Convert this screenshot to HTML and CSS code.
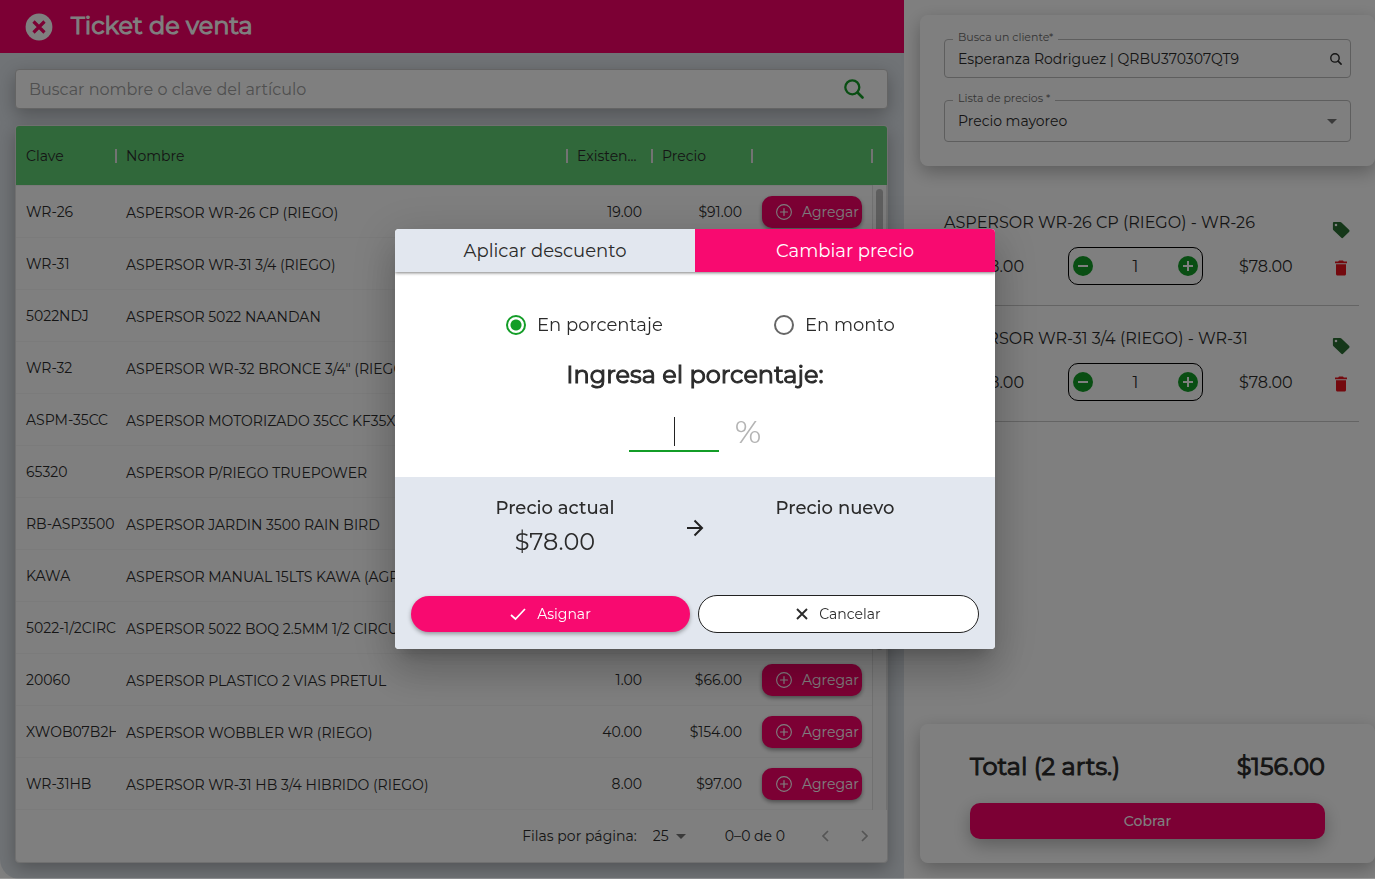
FILE: index.html
```html
<!DOCTYPE html>
<html lang="es">
<head>
<meta charset="utf-8">
<title>Ticket de venta</title>
<link rel="stylesheet" href="styles.css">
</head>
<body>
<svg class="sprite" aria-hidden="true">
  <symbol id="i-plus" viewBox="0 0 16 16"><circle cx="8" cy="8" r="7.4" fill="none" stroke="currentColor" stroke-width="1.1"/><path d="M8 4.500v7M4.500 8h7" fill="none" stroke="currentColor" stroke-width="1.2" stroke-linecap="round"/></symbol>
  <symbol id="i-tag" viewBox="0 0 18 18"><path fill="currentColor" fill-rule="evenodd" d="M2.200.9h6c.5 0 .9.200 1.200.5l7.600 7.300c.7.700.7 1.500 0 2.200l-5.700 5.700c-.7.700-1.500.7-2.200 0L1.500 9.300C1.100 9 .9 8.600.9 8.100v-6C.9 1.400 1.400.9 2.200.9zM4 2.700a1.300 1.300 0 1 0 0 2.600 1.300 1.300 0 0 0 0-2.600z"/></symbol>
  <symbol id="i-trash" viewBox="0 0 14 16"><path fill="currentColor" d="M1 1.500h3.200L5 .6h4l.8.9H13v1.700H1zM2 4.200h10v9.900c0 .9-.6 1.500-1.500 1.500h-7c-.9 0-1.500-.6-1.500-1.500z"/></symbol>
  <symbol id="i-search" viewBox="0 0 20 20"><circle cx="8.300" cy="8.300" r="7" fill="none" stroke="currentColor" stroke-width="2.300"/><path d="M13.500 13.500L18.500 18.500" stroke="currentColor" stroke-width="2.600" stroke-linecap="round"/></symbol>
  <symbol id="i-minus-solid" viewBox="0 0 20 20"><circle cx="10" cy="10" r="10" fill="currentColor"/><path d="M5 10h10" stroke="#fff" stroke-width="2"/></symbol>
  <symbol id="i-plus-solid" viewBox="0 0 20 20"><circle cx="10" cy="10" r="10" fill="currentColor"/><path d="M5 10h10M10 5v10" stroke="#fff" stroke-width="2"/></symbol>
</svg>

<div class="app">
  <main class="catalog">
    <header class="topbar">
      <button class="icon-btn close" aria-label="Cerrar">
        <svg width="28" height="28" viewBox="0 0 28 28"><circle cx="14" cy="14" r="13.400" fill="#fff"/><path d="M8.500 8.500l11 11M19.500 8.500l-11 11" stroke="#f80068" stroke-width="3.200"/></svg>
      </button>
      <h1 class="strong">Ticket de venta</h1>
    </header>
    <div class="catalog-body">
      <div class="search">
        <input type="text" aria-label="Buscar artículo" placeholder="Buscar nombre o clave del artículo">
        <button class="icon-btn green" aria-label="Buscar"><svg width="20" height="20"><use href="#i-search"/></svg></button>
      </div>
      <section class="grid-card">
        <div class="grid-scroll">
          <table>
            <colgroup><col class="c-key"><col><col class="c-stock"><col class="c-price"><col class="c-action"><col class="c-bar"></colgroup>
            <thead><tr><th>Clave</th><th>Nombre</th><th>Existen...</th><th>Precio</th><th></th><th></th></tr></thead>
            <tbody>
              <tr><td>WR-26</td><td>ASPERSOR WR-26 CP (RIEGO)</td><td class="num">19.00</td><td class="num">$91.00</td><td><button class="add"><svg width="16" height="16"><use href="#i-plus"/></svg>Agregar</button></td><td></td></tr>
              <tr><td>WR-31</td><td>ASPERSOR WR-31 3/4 (RIEGO)</td><td></td><td></td><td></td><td></td></tr>
              <tr><td>5022NDJ</td><td>ASPERSOR 5022 NAANDAN</td><td></td><td></td><td></td><td></td></tr>
              <tr><td>WR-32</td><td>ASPERSOR WR-32 BRONCE 3/4" (RIEGO)</td><td></td><td></td><td></td><td></td></tr>
              <tr><td>ASPM-35CC</td><td>ASPERSOR MOTORIZADO 35CC KF35X</td><td></td><td></td><td></td><td></td></tr>
              <tr><td>65320</td><td>ASPERSOR P/RIEGO TRUEPOWER</td><td></td><td></td><td></td><td></td></tr>
              <tr><td>RB-ASP3500</td><td>ASPERSOR JARDIN 3500 RAIN BIRD</td><td></td><td></td><td></td><td></td></tr>
              <tr><td>KAWA</td><td>ASPERSOR MANUAL 15LTS KAWA (AGRICOLA)</td><td></td><td></td><td></td><td></td></tr>
              <tr><td>5022-1/2CIRC</td><td>ASPERSOR 5022 BOQ 2.5MM 1/2 CIRCULO</td><td></td><td></td><td></td><td></td></tr>
              <tr><td>20060</td><td>ASPERSOR PLASTICO 2 VIAS PRETUL</td><td class="num">1.00</td><td class="num">$66.00</td><td><button class="add"><svg width="16" height="16"><use href="#i-plus"/></svg>Agregar</button></td><td></td></tr>
              <tr><td>XWOB07B2H</td><td>ASPERSOR WOBBLER WR (RIEGO)</td><td class="num">40.00</td><td class="num">$154.00</td><td><button class="add"><svg width="16" height="16"><use href="#i-plus"/></svg>Agregar</button></td><td></td></tr>
              <tr><td>WR-31HB</td><td>ASPERSOR WR-31 HB 3/4 HIBRIDO (RIEGO)</td><td class="num">8.00</td><td class="num">$97.00</td><td><button class="add"><svg width="16" height="16"><use href="#i-plus"/></svg>Agregar</button></td><td></td></tr>
            </tbody>
          </table>
          <div class="track"><div class="thumb"></div></div>
        </div>
        <footer class="pager">
          <label for="rows">Filas por página:</label>
          <div class="select-wrap rows-wrap"><select id="rows"><option>25</option></select></div>
          <span class="range">0–0 de 0</span>
          <button class="icon-btn nav" aria-label="Página anterior"><svg width="8" height="12" viewBox="0 0 8 12"><path d="M7 1L2 6l5 5" fill="none" stroke="currentColor" stroke-width="1.700"/></svg></button>
          <button class="icon-btn nav" aria-label="Página siguiente"><svg width="8" height="12" viewBox="0 0 8 12"><path d="M1 1l5 5-5 5" fill="none" stroke="currentColor" stroke-width="1.700"/></svg></button>
        </footer>
      </section>
    </div>
  </main>

  <aside class="ticket">
    <section class="card client">
      <div class="field field-client">
        <label for="client">Busca un cliente*</label>
        <input id="client" type="text" value="Esperanza Rodriguez | QRBU370307QT9">
        <svg width="12" height="12"><use href="#i-search"/></svg>
      </div>
      <div class="field select-wrap field-list">
        <label for="list">Lista de precios *</label>
        <select id="list"><option>Precio mayoreo</option></select>
      </div>
    </section>
    <ul class="items">
      <li>
        <div class="item-main">
          <h2>ASPERSOR WR-26 CP (RIEGO) - WR-26</h2>
          <div class="item-row">
            <span class="unit">$78.00</span>
            <div class="counter"><button class="icon-btn green" aria-label="Menos"><svg width="20" height="20"><use href="#i-minus-solid"/></svg></button><span>1</span><button class="icon-btn green" aria-label="Más"><svg width="20" height="20"><use href="#i-plus-solid"/></svg></button></div>
            <span>$78.00</span>
          </div>
        </div>
        <div class="item-tools">
          <button class="icon-btn tag" aria-label="Descuento"><svg width="18" height="18"><use href="#i-tag"/></svg></button>
          <button class="icon-btn trash" aria-label="Eliminar"><svg width="14" height="16"><use href="#i-trash"/></svg></button>
        </div>
      </li>
      <li>
        <div class="item-main">
          <h2>ASPERSOR WR-31 3/4 (RIEGO) - WR-31</h2>
          <div class="item-row">
            <span class="unit">$78.00</span>
            <div class="counter"><button class="icon-btn green" aria-label="Menos"><svg width="20" height="20"><use href="#i-minus-solid"/></svg></button><span>1</span><button class="icon-btn green" aria-label="Más"><svg width="20" height="20"><use href="#i-plus-solid"/></svg></button></div>
            <span>$78.00</span>
          </div>
        </div>
        <div class="item-tools">
          <button class="icon-btn tag" aria-label="Descuento"><svg width="18" height="18"><use href="#i-tag"/></svg></button>
          <button class="icon-btn trash" aria-label="Eliminar"><svg width="14" height="16"><use href="#i-trash"/></svg></button>
        </div>
      </li>
    </ul>
    <section class="card total">
      <div class="total-line strong"><span>Total (2 arts.)</span><span>$156.00</span></div>
      <button class="pay">Cobrar</button>
    </section>
  </aside>
</div>

<div class="overlay">
  <div class="modal" role="dialog" aria-modal="true" aria-label="Cambiar precio">
    <div class="tabs" role="tablist">
      <button role="tab" aria-selected="false">Aplicar descuento</button>
      <button role="tab" aria-selected="true" class="active">Cambiar precio</button>
    </div>
    <div class="modal-body">
      <div class="radios">
        <label><input type="radio" name="mode" checked>En porcentaje</label>
        <label><input type="radio" name="mode">En monto</label>
      </div>
      <label class="prompt strong" for="pct">Ingresa el porcentaje:</label>
      <div class="pct">
        <div class="pct-field"><input id="pct" type="text"><span class="caret"></span></div>
        <span class="sign">%</span>
      </div>
    </div>
    <div class="modal-foot">
      <div class="prices">
        <div><h3>Precio actual</h3><p>$78.00</p></div>
        <div><h3>Precio nuevo</h3></div>
        <svg width="18" height="18" viewBox="0 0 18 18"><path d="M1 9h15M8.500 1.500L16 9l-7.500 7.500" fill="none" stroke="#222" stroke-width="2"/></svg>
      </div>
      <div class="actions">
        <button class="assign"><svg width="16" height="14" viewBox="0 0 16 14"><path d="M1 8l4.500 4L15 2" fill="none" stroke="currentColor" stroke-width="1.700"/></svg>Asignar</button>
        <button class="cancel"><svg width="12" height="12" viewBox="0 0 12 12"><path d="M1 1l10 10M11 1L1 11" fill="none" stroke="currentColor" stroke-width="1.900"/></svg>Cancelar</button>
      </div>
    </div>
  </div>
</div>
</body>
</html>
```

FILE: styles.css
```css
* { box-sizing: border-box; }
body, h1, h2, h3, p, ul { margin: 0; padding: 0; }
body {
  font-family: Montserrat, Inter, "Liberation Sans", sans-serif;
  font-size: 14px;
  color: #2b2b2b;
  background: #fff;
}
button, input, select { font: inherit; color: inherit; }
button { cursor: pointer; }
.sprite { position: absolute; width: 0; height: 0; }
.icon-btn { display: flex; align-items: center; justify-content: center; padding: 0; border: 0; background: none; }
.green { color: #139d27; }
.strong { font-size: 24px; font-weight: 400; -webkit-text-stroke: 1px currentColor; }

.app { display: grid; grid-template-columns: minmax(0, 1fr) 471px; min-height: 100vh; }

/* Catalog */
.catalog { display: flex; flex-direction: column; background: #e0e6ec; border-bottom-left-radius: 20px; }
.topbar { display: flex; align-items: center; gap: 18px; height: 53px; padding: 0 25px; background: #f80068; color: #fff; }
.topbar h1 { padding-bottom: 2px; line-height: 32px; }
.catalog-body { flex: 1; display: flex; flex-direction: column; gap: 16px; padding: 16px 16px 16px 15px; }
.search {
  flex-shrink: 0; display: flex; align-items: center; height: 40px; padding: 0 23px 0 13px;
  background: #fff; border: 1px solid #c8c8c8; border-radius: 4px;
  box-shadow: 0 6px 18px rgba(0, 0, 0, .28);
}
.search input { flex: 1; border: 0; outline: 0; padding: 0; background: none; font-size: 16px; }
.search input::placeholder { color: #a0a0a0; opacity: 1; }
.grid-card {
  flex: 1 0 auto; display: flex; flex-direction: column;
  background: #fff; border: 1px solid #e0e0e0; border-radius: 4px;
  box-shadow: 0 6px 18px rgba(0, 0, 0, .28); overflow: hidden;
}
.grid-scroll { position: relative; }
table { width: 100%; border-collapse: separate; border-spacing: 0; table-layout: fixed; }
.c-key, .c-price { width: 100px; }
.c-stock { width: 85px; }
.c-action { width: 120px; }
.c-bar { width: 15px; }
th { position: relative; height: 60px; padding: 0 10px; background: #60d074; background-clip: padding-box; border-bottom: 1px solid #f2f2f2; text-align: left; font-weight: 400; white-space: nowrap; }
th + th::before { content: ""; position: absolute; left: -1px; top: 23px; width: 2px; height: 14px; background: #e6e6e6; }
td { height: 52px; padding: 0 10px; border-bottom: 1px solid #f7f7f7; white-space: nowrap; }
td:first-child { overflow: hidden; padding-right: 0; }
td:nth-child(2) { padding-top: 2px; }
.num { text-align: right; }
.add {
  display: flex; align-items: center; gap: 10px; width: 100px; height: 32px; padding: 0 0 0 14px;
  border: 0; border-radius: 10px; background: #f80068; color: #fff;
  box-shadow: 0 2px 4px rgba(0, 0, 0, .4);
}
.add svg { flex: none; }
.track { position: absolute; top: 59px; right: 0; bottom: 0; width: 15px; padding: 4px 3px; background: #fafafa; border: 1px solid #e2e2e2; border-width: 0 1px; }
.thumb { height: 461px; border-radius: 4px; background: #bdbdbd; }
.pager { flex: 1; display: flex; align-items: center; justify-content: flex-end; min-height: 52px; padding-right: 18px; }
.select-wrap { position: relative; }
.select-wrap select { width: 100%; height: 100%; border: 0; background: none; appearance: none; outline: 0; }
.select-wrap::after { content: ""; position: absolute; top: 50%; right: 0; margin-top: -2px; border: 5px solid transparent; border-top-color: #757575; border-bottom: 0; pointer-events: none; }
.rows-wrap { width: 33px; height: 24px; margin: 0 39px 0 16px; }
.rows-wrap select { padding: 0; }
.nav { color: #aaa; margin-left: 32px; }
.range { margin-right: 4px; }

/* Ticket */
.ticket { display: flex; flex-direction: column; padding: 15px 0 16px 16px; background: #fff; }
.card { background: #fff; border-radius: 8px; box-shadow: 0 6px 18px rgba(0, 0, 0, .28); }
.client { display: flex; flex-direction: column; gap: 22px; padding: 24px; }
.field { position: relative; border: 1px solid #bcbcbc; border-radius: 4px; }
.field label { position: absolute; top: -10px; left: 8px; padding: 0 5px; background: #fff; color: #6a6a6a; font-size: 11px; line-height: 14px; }
.field-client { display: flex; align-items: center; height: 39px; padding: 0 8px 0 13px; }
.field-client input { flex: 1; min-width: 0; padding: 0; border: 0; outline: 0; background: none; }
.field-list { height: 42px; }
.field-list select { padding: 0 13px; }
.field-list::after { right: 13px; }
.items { flex: 1; list-style: none; padding: 24px 16px 0 24px; }
.items li { display: flex; justify-content: space-between; height: 116px; padding: 21px 9px 20px 0; border-bottom: 1px solid #c9c9c9; }
.item-main { flex: 1; display: flex; flex-direction: column; gap: 12px; }
.items h2 { font-size: 16px; line-height: 24px; font-weight: 400; }
.item-row { display: flex; align-items: center; font-size: 16px; }
.unit { width: 80px; text-align: right; }
.counter { display: flex; align-items: center; justify-content: space-between; width: 135px; height: 38px; margin: 0 36px 0 44px; padding: 0 4px; border: 1px solid #000; border-radius: 10px; }
.item-tools { display: flex; flex-direction: column; align-items: center; gap: 21px; padding-top: 10px; }
.tag { color: #2a6e33; }
.trash { color: #e8121d; }
.total { padding: 24px 50px; }
.total-line { display: flex; justify-content: space-between; line-height: 38px; }
.pay {
  display: block; width: 100%; height: 36px; margin-top: 17px; border: 0; border-radius: 10px;
  background: #f80068; color: #fff; font-weight: 500;
  box-shadow: 0 6px 18px rgba(0, 0, 0, .28);
}

/* Dialog */
.overlay { position: fixed; inset: 0; display: flex; align-items: center; justify-content: center; padding-left: 15px; background: rgba(0, 0, 0, .5); border-bottom: 1px solid rgba(255, 255, 255, .2); }
.modal {
  width: 600px; border-radius: 4px; background: #fff; overflow: hidden;
  box-shadow: 0 11px 15px -7px rgba(0, 0, 0, .2), 0 24px 38px 3px rgba(0, 0, 0, .14), 0 9px 46px 8px rgba(0, 0, 0, .12);
}
.tabs { display: grid; grid-template-columns: 1fr 1fr; box-shadow: 0 1px 3px rgba(0, 0, 0, .5); position: relative; }
.tabs button { height: 43px; padding: 0; border: 0; background: #e2e7ef; font-size: 18px; }
.tabs .active { background: #f80a70; color: #fff; }
.modal-body { display: flex; flex-direction: column; align-items: center; height: 205px; padding-top: 38px; }
.radios { display: grid; grid-template-columns: 158px 121px; column-gap: 110px; padding-left: 11px; }
.radios label { display: flex; align-items: center; gap: 11px; font-size: 18px; line-height: 30px; white-space: nowrap; }
.radios input { appearance: none; flex: none; width: 20px; height: 20px; margin: 0; border: 2px solid #666; border-radius: 50%; }
.radios input:checked { border-color: #139d27; background: radial-gradient(circle, #139d27 0 5px, transparent 6px); }
.prompt { margin-top: 17px; line-height: 36px; }
.pct { display: flex; align-items: center; gap: 16px; margin-top: 18px; }
.pct-field { position: relative; }
.pct input { display: block; width: 90px; height: 41px; border: 0; border-bottom: 2px solid #139d27; outline: 0; text-align: center; font-size: 24px; }
.caret { position: absolute; top: 6px; left: 50%; width: 1px; height: 29px; background: #222; }
.sign { color: #b4b4b4; font-size: 32px; line-height: 40px; }
.modal-foot { padding: 16px; background: #e2e7ef; }
.prices { position: relative; display: grid; grid-template-columns: 1fr 1fr; height: 102px; padding: 0 4px; text-align: center; }
.prices svg { position: absolute; top: 26px; left: 50%; margin-left: -9px; }
.prices h3 { font-size: 18px; font-weight: 500; line-height: 30px; }
.prices p { font-size: 24px; line-height: 38px; }
.actions { display: grid; grid-template-columns: 279px 281px; gap: 8px; align-items: center; }
.actions button { display: flex; align-items: center; justify-content: center; gap: 11px; border-radius: 19px; }
.assign { height: 36px; border: 0; background: #f80a70; color: #fff; box-shadow: 0 2px 4px rgba(0, 0, 0, .35); }
.cancel { height: 38px; border: 1px solid #222; background: #fff; }
```
